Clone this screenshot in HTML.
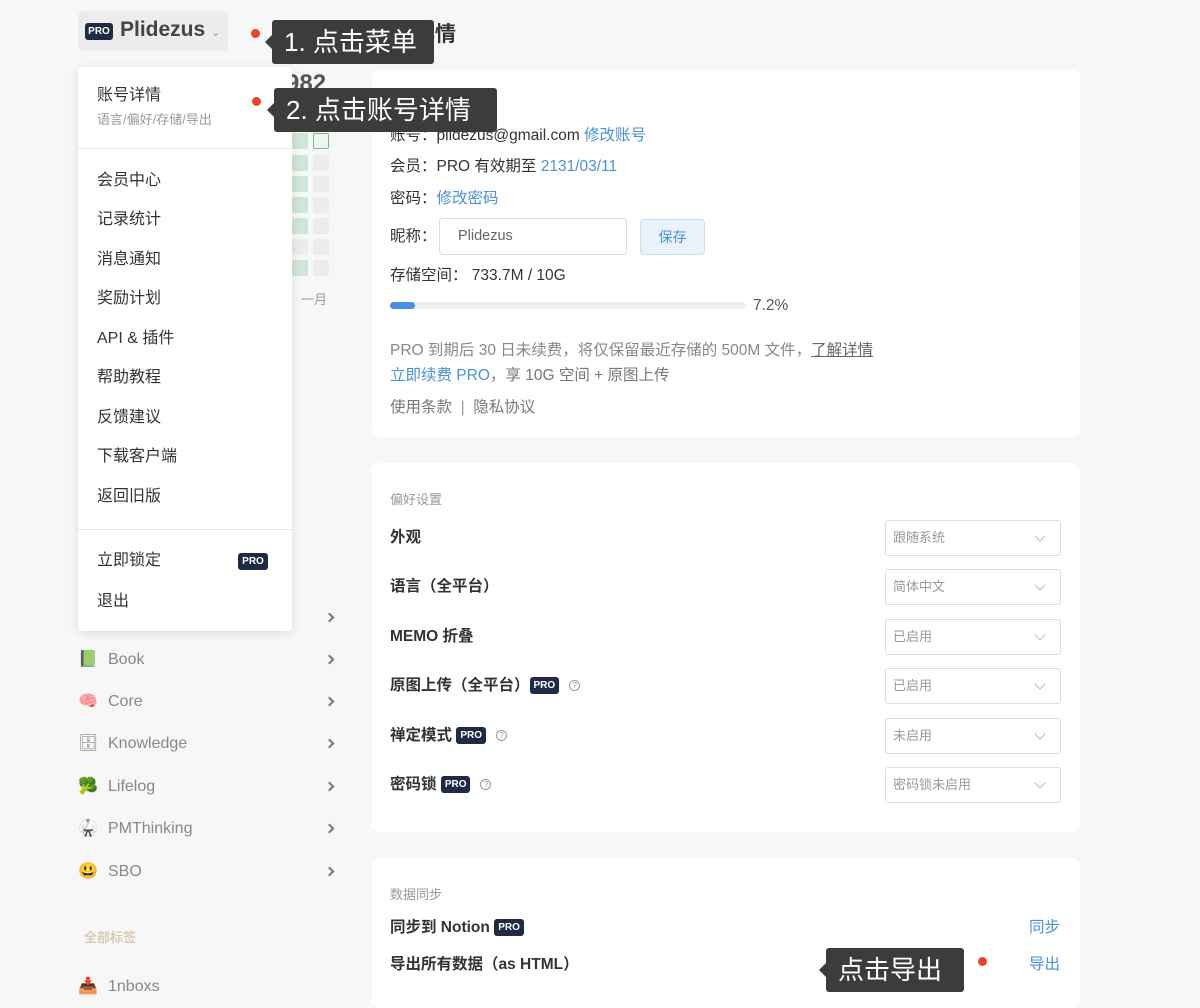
<!DOCTYPE html>
<html><head><meta charset="utf-8"><style>
*{margin:0;padding:0;box-sizing:border-box}
body{width:1200px;height:995px;overflow:hidden;background:#f7f7f7;font-family:"Liberation Sans","Noto Sans CJK SC",sans-serif;color:#333;position:relative}
.a{position:absolute;white-space:nowrap}
.card{position:absolute;left:372px;width:708px;background:#fff;border-radius:8px}
.t{font-size:15.5px;line-height:20px;color:#333}
.blue{color:#4a90d9}
.gray{color:#888}
.pro{display:inline-block;background:#1f2a44;color:#fff;font-size:10px;font-weight:bold;line-height:17px;padding:0 4px;border-radius:3px;vertical-align:middle}
.sel{position:absolute;left:513px;width:176px;height:36px;border:1px solid #ddd;border-radius:3px;font-size:13px;color:#999;line-height:34px;padding-left:7px}
.sel:after{content:"";position:absolute;right:16px;top:11px;width:7px;height:7px;border-right:1px solid #bbb;border-bottom:1px solid #bbb;transform:rotate(45deg)}
.lab{position:absolute;left:18px;font-size:15.5px;font-weight:bold;color:#333;line-height:20px}
.q{display:inline-block;width:11px;height:11px;border:1px solid #999;border-radius:50%;font-size:8px;line-height:9px;text-align:center;color:#999;vertical-align:middle;margin-left:10px;font-weight:normal}
.tip{position:absolute;background:#3c3c3c;color:#fff;font-size:26px;line-height:44px;height:44px;padding:0 0 0 12px;border-radius:3px;white-space:nowrap}
.tip:before{content:"";position:absolute;left:-7px;top:15px;border:7px solid transparent;border-left:0;border-right-color:#3c3c3c}
.dot{position:absolute;width:9px;height:9px;border-radius:50%;background:#e8442b}
.mi{position:absolute;left:19px;font-size:16px;color:#333;line-height:20px}
.sb{position:absolute;left:78px;font-size:16px;color:#888;line-height:20px}
.sb i{font-style:normal;display:inline-block;width:30px}
.chev{position:absolute;left:326px;width:7px;height:7px;border-right:2px solid #777;border-top:2px solid #777;transform:rotate(45deg)}
.hm{position:absolute;width:16px;height:16px;border-radius:2px}
</style></head><body>

<div class="a" style="left:286px;top:70px;font-size:24px;font-weight:bold;color:#555">982</div>
<div class="hm" style="left:292px;top:133px;background:#cfe6d6"></div><div class="hm" style="left:313px;top:133px;border:1px solid #7fb58f;background:#eef5ef"></div>
<div class="hm" style="left:292px;top:155px;background:#cfe6d6"></div><div class="hm" style="left:313px;top:155px;background:#ececec"></div>
<div class="hm" style="left:292px;top:176px;background:#cfe6d6"></div><div class="hm" style="left:313px;top:176px;background:#ececec"></div>
<div class="hm" style="left:292px;top:197px;background:#cfe6d6"></div><div class="hm" style="left:313px;top:197px;background:#ececec"></div>
<div class="hm" style="left:292px;top:218px;background:#cfe6d6"></div><div class="hm" style="left:313px;top:218px;background:#ececec"></div>
<div class="hm" style="left:292px;top:239px;background:#ececec"></div><div class="hm" style="left:313px;top:239px;background:#ececec"></div>
<div class="hm" style="left:292px;top:260px;background:#cfe6d6"></div><div class="hm" style="left:313px;top:260px;background:#ececec"></div>
<div class="a" style="left:301px;top:289px;font-size:13px;color:#999">一月</div>

<div class="chev" style="top:614px"></div>
<div class="sb" style="top:650px"><i>📗</i>Book</div><div class="chev" style="top:656px"></div>
<div class="sb" style="top:692px"><i>🧠</i>Core</div><div class="chev" style="top:698px"></div>
<div class="sb" style="top:734px"><i>🗄</i>Knowledge</div><div class="chev" style="top:740px"></div>
<div class="sb" style="top:777px"><i>🥦</i>Lifelog</div><div class="chev" style="top:783px"></div>
<div class="sb" style="top:819px"><i>🥋</i>PMThinking</div><div class="chev" style="top:825px"></div>
<div class="sb" style="top:862px"><i>😃</i>SBO</div><div class="chev" style="top:868px"></div>
<div class="a" style="left:84px;top:927px;font-size:13px;color:#d8cdb2;font-weight:bold">全部标签</div>
<div class="sb" style="top:977px"><i>📥</i>1nboxs</div>

<div class="a" style="left:78px;top:11px;width:150px;height:40px;background:#ececec;border-radius:6px"></div>
<div class="a" style="left:85px;top:23px;width:28px;height:17px;background:#1f2a44;border-radius:3px;color:#fff;font-size:10px;font-weight:bold;line-height:17px;text-align:center">PRO</div>
<div class="a" style="left:120px;top:18px;font-size:21px;font-weight:bold;color:#444">Plidezus <span style="font-size:11px;color:#999;font-weight:normal">⌄</span></div>

<div class="a" style="left:372px;top:18px;font-size:21px;font-weight:bold;color:#333">账号详情</div>

<div class="card" style="top:70px;height:367px">
  <div class="a t" style="left:18px;top:56px">账号：plidezus@gmail.com <span class="blue">修改账号</span></div>
  <div class="a t" style="left:18px;top:87px">会员：PRO 有效期至 <span class="blue">2131/03/11</span></div>
  <div class="a t" style="left:18px;top:119px">密码：<span class="blue">修改密码</span></div>
  <div class="a t" style="left:18px;top:157px">昵称：</div>
  <div class="a" style="left:67px;top:148px;width:188px;height:37px;border:1px solid #ddd;border-radius:4px;font-size:14.5px;color:#666;line-height:35px;padding-left:18px">Plidezus</div>
  <div class="a" style="left:268px;top:149px;width:65px;height:36px;border:1px solid #c9ddf2;background:#eaf3fc;border-radius:4px;font-size:14px;color:#4a90d9;line-height:34px;text-align:center">保存</div>
  <div class="a t" style="left:18px;top:196px">存储空间：&nbsp;733.7M / 10G</div>
  <div class="a" style="left:18px;top:232px;width:356px;height:7px;background:#eceef2;border-radius:4px"><div style="width:25px;height:7px;background:#4a90e2;border-radius:4px"></div></div>
  <div class="a t" style="left:381px;top:226px;color:#555">7.2%</div>
  <div class="a t gray" style="left:18px;top:271px">PRO 到期后 30 日未续费，将仅保留最近存储的 500M 文件，<span style="text-decoration:underline;color:#666">了解详情</span></div>
  <div class="a t" style="left:18px;top:296px;color:#777"><span class="blue">立即续费 PRO</span>，享 10G 空间 + 原图上传</div>
  <div class="a t" style="left:18px;top:328px;color:#777">使用条款 <span style="color:#999">&nbsp;|&nbsp;</span> 隐私协议</div>
</div>

<div class="card" style="top:463px;height:369px">
  <div class="a" style="left:18px;top:26px;font-size:13px;color:#999">偏好设置</div>
  <div class="lab" style="top:65px">外观</div><div class="sel" style="top:57px">跟随系统</div>
  <div class="lab" style="top:114px">语言（全平台）</div><div class="sel" style="top:106px">简体中文</div>
  <div class="lab" style="top:164px">MEMO 折叠</div><div class="sel" style="top:156px">已启用</div>
  <div class="lab" style="top:213px">原图上传（全平台）<span class="pro">PRO</span><span class="q">?</span></div><div class="sel" style="top:205px">已启用</div>
  <div class="lab" style="top:263px">禅定模式 <span class="pro">PRO</span><span class="q">?</span></div><div class="sel" style="top:255px">未启用</div>
  <div class="lab" style="top:312px">密码锁 <span class="pro">PRO</span><span class="q">?</span></div><div class="sel" style="top:304px">密码锁未启用</div>
</div>

<div class="card" style="top:858px;height:150px">
  <div class="a" style="left:18px;top:26px;font-size:13px;color:#999">数据同步</div>
  <div class="lab" style="top:60px">同步到 Notion <span class="pro">PRO</span></div>
  <div class="a t blue" style="left:657px;top:60px">同步</div>
  <div class="lab" style="top:97px">导出所有数据（as HTML）</div>
  <div class="a t blue" style="left:657px;top:97px">导出</div>
</div>

<div class="a" style="left:78px;top:67px;width:214px;height:564px;background:#fff;border-radius:4px;box-shadow:0 2px 10px rgba(0,0,0,0.12)">
  <div class="mi" style="top:19px">账号详情</div>
  <div class="a" style="left:19px;top:42px;font-size:13px;color:#999">语言/偏好/存储/导出</div>
  <div class="a" style="left:0;top:81px;width:214px;height:1px;background:#e5e5e5"></div>
  <div class="mi" style="top:104px">会员中心</div>
  <div class="mi" style="top:143px">记录统计</div>
  <div class="mi" style="top:183px">消息通知</div>
  <div class="mi" style="top:222px">奖励计划</div>
  <div class="mi" style="top:262px">API &amp; 插件</div>
  <div class="mi" style="top:301px">帮助教程</div>
  <div class="mi" style="top:341px">反馈建议</div>
  <div class="mi" style="top:380px">下载客户端</div>
  <div class="mi" style="top:420px">返回旧版</div>
  <div class="a" style="left:0;top:462px;width:214px;height:1px;background:#e5e5e5"></div>
  <div class="mi" style="top:484px">立即锁定</div>
  <div class="a" style="left:160px;top:486px;width:30px;height:17px;background:#1f2a44;border-radius:3px;color:#fff;font-size:10px;font-weight:bold;line-height:17px;text-align:center">PRO</div>
  <div class="mi" style="top:525px">退出</div>
</div>

<div class="dot" style="left:251px;top:29px"></div>
<div class="tip" style="left:272px;top:20px;width:162px">1. 点击菜单</div>
<div class="dot" style="left:252px;top:97px"></div>
<div class="tip" style="left:274px;top:88px;width:223px">2. 点击账号详情</div>
<div class="dot" style="left:978px;top:957px"></div>
<div class="tip" style="left:826px;top:948px;width:138px">点击导出</div>
</body></html>
